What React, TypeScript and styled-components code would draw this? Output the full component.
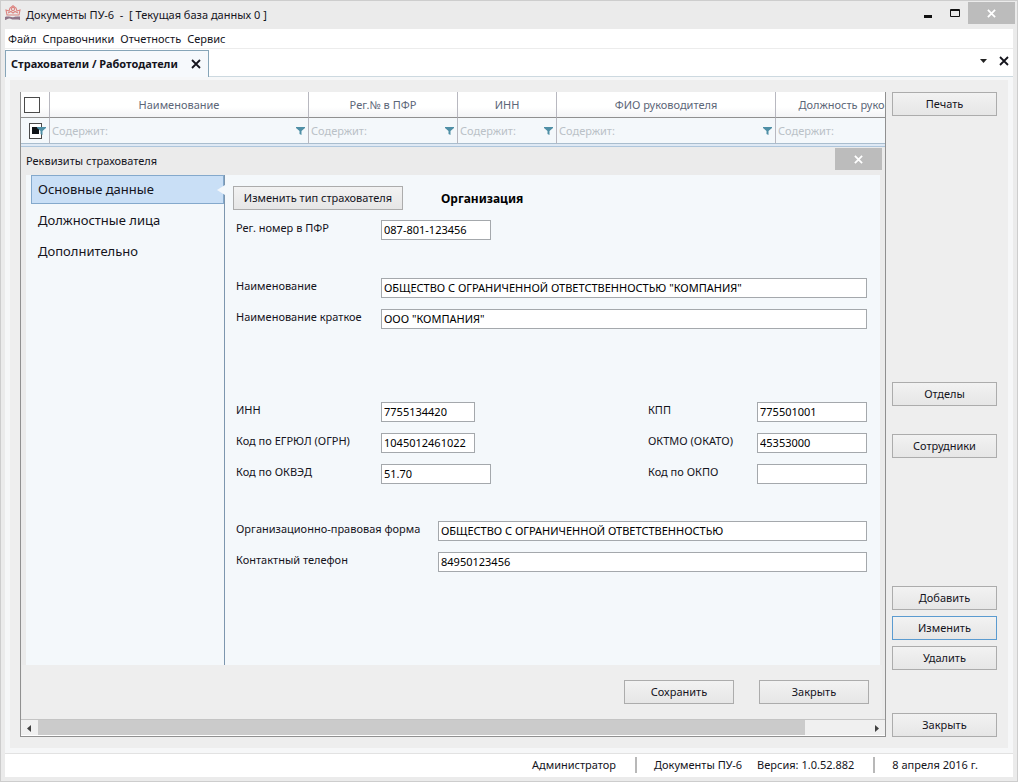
import React from 'react';
import styled, { createGlobalStyle, css } from 'styled-components';

const GlobalStyle = createGlobalStyle`
  *, *::before, *::after { box-sizing: border-box; }
  body {
    margin: 0;
    font-family: 'Noto Sans', 'Open Sans', sans-serif;
    font-size: 11px;
    line-height: 16px;
    color: #14141c;
    background: #ebebeb;
  }
  button, input { font: inherit; color: inherit; margin: 0; }
`;

const Window = styled.div`
  min-height: 100vh;
  display: flex;
  flex-direction: column;
  padding: 0 4px 4px;
  background: #ebebeb;
  border: 1px solid #cdcdcd;
`;

const TitleBar = styled.header`
  display: flex;
  align-items: flex-start;
  height: 28px;
  margin-right: -2px;
`;

const AppTitle = styled.h1`
  flex: 1;
  margin: 0;
  padding: 6px 0 0 5px;
  font-size: 11px;
  font-weight: 400;
  line-height: 16px;
  white-space: pre;
`;

const AppIcon = styled.svg`
  width: 16px;
  height: 16px;
  margin-top: 4px;
`;

const CaptionButton = styled.button`
  display: grid;
  place-items: center;
  width: 27px;
  height: 24px;
  padding: 0;
  border: 0;
  background: transparent;
`;

const CaptionClose = styled(CaptionButton)`
  width: 47px;
  height: 22px;
  margin-top: 1px;
  color: #fff;
  background: #bcbcbc;
`;

const MenuBar = styled.nav`
  display: flex;
  gap: 6px;
  height: 20px;
  padding: 2px 3px;
  background: #fff;
  border-bottom: 1px solid #ececec;
`;

const MenuItem = styled.button`
  padding: 0;
  border: 0;
  background: transparent;
  line-height: 16px;
`;

const TabStrip = styled.div`
  display: flex;
  align-items: flex-end;
  height: 28px;
  background: #fff;
  border-bottom: 1px solid #cdd9e0;
`;

const DocTab = styled.div`
  display: flex;
  align-items: center;
  justify-content: space-between;
  width: 204px;
  height: 27px;
  margin-bottom: -1px;
  padding: 0 4px 0 5px;
  background: #f6f9fc;
  border: 1px solid #86a5b8;
  border-bottom: 0;
  font-weight: 700;
`;

const StripTools = styled.div`
  display: flex;
  gap: 5px;
  margin-left: auto;
  padding: 0 1px 7px 0;
`;

const GlyphButton = styled.button`
  display: grid;
  place-items: center;
  width: 16px;
  height: 16px;
  padding: 0;
  border: 0;
  background: transparent;
`;

const Workspace = styled.main`
  flex: 1;
  display: flex;
  gap: 6px;
  padding: 12px 11px 11px 10px;
  background: #eee;
  border: 5px solid #f6f7f8;
  border-top-width: 3px;
`;

const RegistryPanel = styled.section`
  flex: 1;
  min-width: 0;
  display: flex;
  flex-direction: column;
  background: #ebebeb;
  border: 1px solid #909090;
  border-top: 0;
`;

const TableClip = styled.div`
  overflow: hidden;
  padding-bottom: 2px;
  background: #dfe9f4;
  border-bottom: 1px solid #aec6dc;
`;

const RegistryTable = styled.table`
  width: 937px;
  table-layout: fixed;
  border-collapse: separate;
  border-spacing: 0;
`;

const HeadCell = styled.th`
  height: 26px;
  padding: 0;
  color: #5c6678;
  font-weight: 400;
  text-align: center;
  background: linear-gradient(#fff 60%, #f3f4f6);
  border-right: 1px solid #b8b8c0;
  border-bottom: 1px solid #909090;
`;

const FilterCell = styled.td`
  height: 26px;
  padding: 0 3px 0 2px;
  background: #f4f8fb;
  border-right: 1px solid #b8b8c0;
  border-bottom: 1px solid #a9bdce;
`;

const FilterRow = styled.div`
  display: flex;
  align-items: center;
`;

const FilterInput = styled.input`
  flex: 1;
  min-width: 0;
  height: 20px;
  padding: 0;
  border: 0;
  outline: 0;
  background: transparent;
  &::placeholder { color: #bac1c7; opacity: 1; }
`;

const SelectBox = styled.input<{ $mixed?: boolean }>`
  appearance: none;
  display: block;
  width: 16px;
  height: 16px;
  margin-left: 3px;
  background: #fff;
  border: 1px solid #4a4a4a;
  ${({ $mixed }) =>
    $mixed &&
    css`
      flex: none;
      width: 13px;
      margin-left: 6px;
      background: linear-gradient(#101418, #101418) center / 7px 7px no-repeat #fff;
    `}
`;

const Funnel = styled.svg<{ $overlap?: boolean }>`
  flex: none;
  width: 9px;
  height: 8px;
  margin-left: ${({ $overlap }) => ($overlap ? '-5px' : '0')};
`;

const Dialog = styled.section`
  flex: 1;
  display: flex;
  flex-direction: column;
  padding: 0 3px 0 1px;
`;

const DialogHeader = styled.header`
  display: flex;
  justify-content: space-between;
  height: 28px;
`;

const DialogTitle = styled.h2`
  margin: 0;
  padding: 6px 0 0 4px;
  font-size: 11px;
  font-weight: 400;
  line-height: 16px;
`;

const DialogBody = styled.div`
  flex: 1;
  display: flex;
  margin: 0 2px 0 4px;
  padding-left: 5px;
  background: #f4f8fb;
`;

const SideNav = styled.nav`
  flex: none;
  display: flex;
  flex-direction: column;
  gap: 2px;
  width: 194px;
  border-right: 1px solid #7d96ae;
`;

const SideItem = styled.button<{ $active?: boolean }>`
  position: relative;
  height: 29px;
  padding: 0 6px 1px;
  font-size: 13px;
  text-align: left;
  border: 1px solid transparent;
  background: transparent;
  ${({ $active }) =>
    $active &&
    css`
      background: #c9dff6;
      border-color: #84a9cc;
      &::after {
        content: '';
        position: absolute;
        right: -2px;
        top: 9px;
        border: 5px solid transparent;
        border-right: 8px solid #f4f8fb;
        border-left: 0;
      }
    `}
`;

const Form = styled.form`
  flex: 1;
  display: flex;
  flex-direction: column;
  padding: 11px 13px 0 8px;
`;

const TypeRow = styled.div`
  display: flex;
  align-items: center;
  gap: 38px;
  margin-bottom: 10px;
`;

const TypeName = styled.strong`
  padding-top: 2px;
  font-size: 12px;
  color: #000;
`;

const FieldGroup = styled.div<{ $before?: number }>`
  display: flex;
  flex-direction: column;
  gap: 11px;
  margin-top: ${({ $before = 0 }) => $before}px;
  padding-left: 3px;
`;

const FieldRow = styled.div`
  display: flex;
  align-items: flex-start;
  height: 20px;
`;

const Label = styled.label<{ $width?: number; $right?: boolean }>`
  flex: none;
  width: ${({ $width = 145 }) => $width}px;
  margin-left: ${({ $right }) => ($right ? 'auto' : '0')};
  line-height: 16px;
`;

const TextField = styled.input<{ $width?: number }>`
  ${({ $width }) => ($width ? `flex: none; width: ${$width}px;` : 'flex: 1;')}
  min-width: 0;
  height: 20px;
  padding: 0 2px 1px;
  color: #000;
  background: #fff;
  border: 1px solid #a4a8ac;
  border-radius: 0;
`;

const PushButton = styled.button<{ $width?: number; $focus?: boolean }>`
  width: ${({ $width = 105 }) => $width}px;
  height: 24px;
  padding: 0;
  text-align: center;
  background: linear-gradient(#f2f2f2, #e6e6e6);
  border: 1px solid ${({ $focus }) => ($focus ? '#5b9bd0' : '#acacac')};
`;

const DialogFooter = styled.footer`
  display: flex;
  justify-content: flex-end;
  gap: 25px;
  height: 54px;
  padding: 15px 13px 0 0;
  background: #eee;
`;

const ScrollBar = styled.div`
  display: flex;
  height: 17px;
  background: #f0f0f0;
  border-bottom: 1px solid #fff;
  border-top: 1px solid #c4c4c4;
`;

const ScrollTrack = styled.div`
  flex: 1;
  display: grid;
  grid-template-columns: 12fr 1fr;
  padding-left: 1px;
`;

const ScrollThumb = styled.div`
  background: #cbcbcb;
`;

const ActionColumn = styled.aside`
  flex: none;
  display: flex;
  flex-direction: column;
`;

const ActionGroup = styled.div<{ $before: string; $gap?: number }>`
  display: flex;
  flex-direction: column;
  gap: ${({ $gap = 0 }) => $gap}px;
  margin-top: ${({ $before }) => $before};
`;

const StatusBar = styled.footer`
  display: flex;
  justify-content: flex-end;
  align-items: center;
  height: 24px;
  padding: 0 35px 1px 0;
  background: #fff;
  border-top: 1px solid #e2e2e2;
`;

const StatusGroup = styled.div`
  display: flex;
  gap: 15px;
  padding: 0 19px 0 17px;
  & + & { border-left: 2px solid #b8b8b8; }
  &:last-child { padding-right: 0; }
`;

const Cross = ({ size, weight }: { size: number; weight: number }) => (
  <svg width={size} height={size} viewBox="0 0 10 10" aria-hidden="true">
    <path d="M1 1L9 9M9 1L1 9" stroke="currentColor" strokeWidth={weight} fill="none" />
  </svg>
);

const FilterIcon = ({ overlap }: { overlap?: boolean }) => (
  <Funnel viewBox="0 0 9 8" $overlap={overlap} aria-hidden="true">
    <path d="M0 0H9V1L5.500 4V8L3.500 7V4L0 1Z" fill="#4f8fa6" />
  </Funnel>
);

const columns = [
  { title: 'Наименование', width: 259 },
  { title: 'Рег.№ в ПФР', width: 149 },
  { title: 'ИНН', width: 99 },
  { title: 'ФИО руководителя', width: 219 },
  { title: 'Должность руководителя', width: 182 },
];

const menu = ['Файл', 'Справочники', 'Отчетность', 'Сервис'];
const sections = ['Основные данные', 'Должностные лица', 'Дополнительно'];

type FieldProps = {
  id: string;
  label: string;
  value?: string;
  width?: number;
  labelWidth?: number;
  right?: boolean;
};

const Field = ({ id, label, value = '', width, labelWidth, right }: FieldProps) => (
  <>
    <Label htmlFor={id} $width={labelWidth} $right={right}>{label}</Label>
    <TextField id={id} type="text" defaultValue={value} $width={width} />
  </>
);

export default function App() {
  return (
    <>
      <GlobalStyle />
      <Window>
        <TitleBar>
          <AppIcon viewBox="0 0 16 16" aria-hidden="true">
            <g fill="none" stroke="#dc8480" strokeWidth="1.100">
              <path d="M2 10L1 5L4 6L5 3L8 0.800L11 3L12 6L15 5L14 10Z" />
              <circle cx="8" cy="4" r="1.600" />
              <path d="M3 8L6 6.500L8 8L10 6.500L13 8" />
            </g>
            <path d="M0 12C4 10.500 6 13 9 12S13 11.500 15 11.500V15C11 13.500 9 15.500 6 14S2 15 0 15Z" fill="#8f7488" />
          </AppIcon>
          <AppTitle>{'Документы ПУ-6  -  [ Текущая база данных 0 ]'}</AppTitle>
          <CaptionButton type="button" aria-label="Свернуть">
            <svg width="8" height="10" aria-hidden="true"><path d="M0 8.500H8" stroke="#111" strokeWidth="3" /></svg>
          </CaptionButton>
          <CaptionButton type="button" aria-label="Развернуть">
            <svg width="10" height="8" aria-hidden="true">
              <path d="M0.500 0.500H9.500V7.500H0.500ZM0 1.500H10" fill="none" stroke="#111" />
            </svg>
          </CaptionButton>
          <CaptionClose type="button" aria-label="Закрыть программу"><Cross size={9} weight={2} /></CaptionClose>
        </TitleBar>

        <MenuBar>
          {menu.map((item) => <MenuItem key={item} type="button">{item}</MenuItem>)}
        </MenuBar>

        <TabStrip>
          <DocTab>
            Страхователи / Работодатели
            <GlyphButton type="button" aria-label="Закрыть вкладку"><Cross size={10} weight={1.8} /></GlyphButton>
          </DocTab>
          <StripTools>
            <GlyphButton type="button" aria-label="Список вкладок">
              <svg width="7" height="4" aria-hidden="true"><path d="M0 0H7L3.500 4Z" fill="#222" /></svg>
            </GlyphButton>
            <GlyphButton type="button" aria-label="Закрыть текущую"><Cross size={10} weight={1.8} /></GlyphButton>
          </StripTools>
        </TabStrip>

        <Workspace>
          <RegistryPanel>
            <TableClip>
              <RegistryTable>
                <colgroup>
                  <col style={{ width: 29 }} />
                  {columns.map((c) => <col key={c.title} style={{ width: c.width }} />)}
                </colgroup>
                <thead>
                  <tr>
                    <HeadCell><SelectBox type="checkbox" aria-label="Выбрать все" /></HeadCell>
                    {columns.map((c) => <HeadCell key={c.title} scope="col">{c.title}</HeadCell>)}
                  </tr>
                </thead>
                <tbody>
                  <tr>
                    <FilterCell>
                      <FilterRow>
                        <SelectBox type="checkbox" aria-label="Фильтр по отметке" $mixed />
                        <FilterIcon overlap />
                      </FilterRow>
                    </FilterCell>
                    {columns.map((c) => (
                      <FilterCell key={c.title}>
                        <FilterRow>
                          <FilterInput type="text" placeholder="Содержит:" aria-label={c.title} />
                          <FilterIcon />
                        </FilterRow>
                      </FilterCell>
                    ))}
                  </tr>
                </tbody>
              </RegistryTable>
            </TableClip>

            <Dialog role="dialog" aria-labelledby="dialog-title">
              <DialogHeader>
                <DialogTitle id="dialog-title">Реквизиты страхователя</DialogTitle>
                <CaptionClose type="button" aria-label="Закрыть окно"><Cross size={9} weight={2} /></CaptionClose>
              </DialogHeader>
              <DialogBody>
                <SideNav>
                  {sections.map((s, i) => (
                    <SideItem key={s} type="button" $active={i === 0}>{s}</SideItem>
                  ))}
                </SideNav>
                <Form>
                  <TypeRow>
                    <PushButton type="button" $width={170}>Изменить тип страхователя</PushButton>
                    <TypeName>Организация</TypeName>
                  </TypeRow>
                  <FieldGroup>
                    <FieldRow><Field id="pfr" label="Рег. номер в ПФР" value="087-801-123456" width={110} /></FieldRow>
                  </FieldGroup>
                  <FieldGroup $before={38}>
                    <FieldRow>
                      <Field id="name" label="Наименование" value={'ОБЩЕСТВО С ОГРАНИЧЕННОЙ ОТВЕТСТВЕННОСТЬЮ "КОМПАНИЯ"'} />
                    </FieldRow>
                    <FieldRow><Field id="short" label="Наименование краткое" value={'ООО "КОМПАНИЯ"'} /></FieldRow>
                  </FieldGroup>
                  <FieldGroup $before={73}>
                    <FieldRow>
                      <Field id="inn" label="ИНН" value="7755134420" width={94} />
                      <Field id="kpp" label="КПП" value="775501001" width={110} labelWidth={109} right />
                    </FieldRow>
                    <FieldRow>
                      <Field id="ogrn" label="Код по ЕГРЮЛ (ОГРН)" value="1045012461022" width={94} />
                      <Field id="oktmo" label="ОКТМО (ОКАТО)" value="45353000" width={110} labelWidth={109} right />
                    </FieldRow>
                    <FieldRow>
                      <Field id="okved" label="Код по ОКВЭД" value="51.70" width={110} />
                      <Field id="okpo" label="Код по ОКПО" width={110} labelWidth={109} right />
                    </FieldRow>
                  </FieldGroup>
                  <FieldGroup $before={37}>
                    <FieldRow>
                      <Field id="opf" label="Организационно-правовая форма" value="ОБЩЕСТВО С ОГРАНИЧЕННОЙ ОТВЕТСТВЕННОСТЬЮ" labelWidth={202} />
                    </FieldRow>
                    <FieldRow><Field id="phone" label="Контактный телефон" value="84950123456" labelWidth={202} /></FieldRow>
                  </FieldGroup>
                </Form>
              </DialogBody>
              <DialogFooter>
                <PushButton type="button" $width={110}>Сохранить</PushButton>
                <PushButton type="button" $width={110}>Закрыть</PushButton>
              </DialogFooter>
            </Dialog>

            <ScrollBar>
              <GlyphButton type="button" aria-label="Влево">
                <svg width="4" height="7" aria-hidden="true"><path d="M4 0V7L0 3.500Z" fill="#404040" /></svg>
              </GlyphButton>
              <ScrollTrack><ScrollThumb /></ScrollTrack>
              <GlyphButton type="button" aria-label="Вправо">
                <svg width="4" height="7" aria-hidden="true"><path d="M0 0V7L4 3.500Z" fill="#404040" /></svg>
              </GlyphButton>
            </ScrollBar>
          </RegistryPanel>

          <ActionColumn>
            <PushButton type="button">Печать</PushButton>
            <ActionGroup $before="266px" $gap={28}>
              <PushButton type="button">Отделы</PushButton>
              <PushButton type="button">Сотрудники</PushButton>
            </ActionGroup>
            <ActionGroup $before="128px" $gap={6}>
              <PushButton type="button">Добавить</PushButton>
              <PushButton type="button" $focus>Изменить</PushButton>
              <PushButton type="button">Удалить</PushButton>
            </ActionGroup>
            <ActionGroup $before="auto">
              <PushButton type="button">Закрыть</PushButton>
            </ActionGroup>
          </ActionColumn>
        </Workspace>

        <StatusBar>
          <StatusGroup>Администратор</StatusGroup>
          <StatusGroup><span>Документы ПУ-6</span><span>Версия: 1.0.52.882</span></StatusGroup>
          <StatusGroup>8 апреля 2016 г.</StatusGroup>
        </StatusBar>
      </Window>
    </>
  );
}
